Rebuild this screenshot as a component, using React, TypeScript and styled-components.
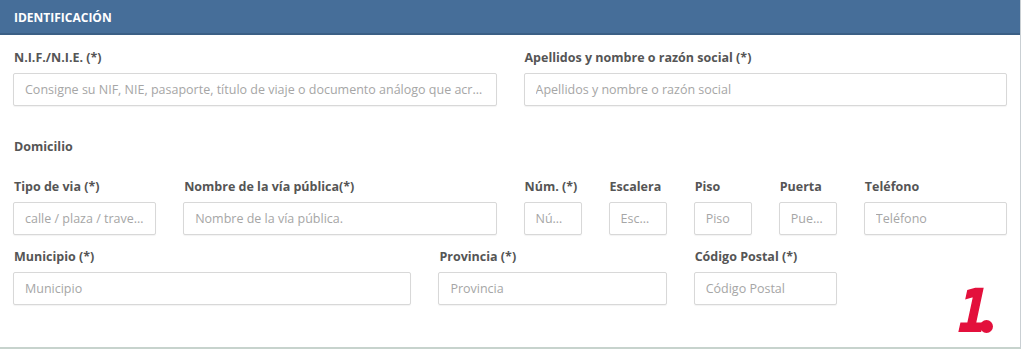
import styled, { createGlobalStyle } from "styled-components";

const GlobalStyle = createGlobalStyle`
  html, body {
    margin: 0;
    padding: 0;
    background: #ffffff;
  }
  body {
    font-family: "Open Sans", "Liberation Sans", Arial, sans-serif;
  }
`;

// Outer panel with the blue heading bar
const Panel = styled.section`
  position: relative;
  width: 1021px;
  height: 349px;
  box-sizing: border-box;
  border-right: 1px solid #c9cfd3;
  border-bottom: 2px solid #c7d3cd;
  background: #fff;
`;

const Heading = styled.div`
  height: 35px;
  box-sizing: border-box;
  background: #466e99;
  border-bottom: 2px solid #3b5f85;
  color: #fff;
  font-size: 12px;
  font-weight: 700;
  padding: 9px 14px 0;
`;

const Body = styled.div`
  padding: 15px 13px 0 13px;
`;

// Bootstrap like 12 column grid
const Row = styled.div<{ $mt?: number }>`
  display: grid;
  grid-template-columns: repeat(12, 1fr);
  column-gap: 27px;
  margin-top: ${(p) => p.$mt ?? 0}px;
`;

const Field = styled.div<{ $span: number }>`
  grid-column: span ${(p) => p.$span};
  display: flex;
  flex-direction: column;
  min-width: 0;
`;

const Label = styled.label`
  font-size: 12.5px;
  font-weight: 700;
  color: #555;
  line-height: 16px;
  padding-left: 1px;
  margin-bottom: 7px;
  white-space: nowrap;
`;

const Section = styled.div`
  font-size: 12.5px;
  font-weight: 700;
  color: #555;
  line-height: 16px;
  padding-left: 1px;
  margin-top: 33px;
`;

const Input = styled.input`
  height: 33px;
  box-sizing: border-box;
  width: 100%;
  border: 1px solid #d8d8d8;
  border-radius: 2px;
  box-shadow: 0 1px 1px rgba(0, 0, 0, 0.05);
  padding: 0 11px;
  font-family: inherit;
  font-size: 12.5px;
  color: #555;
  text-overflow: ellipsis;
  outline: none;

  &::placeholder {
    color: #a6a6a6;
    text-overflow: ellipsis;
  }
`;

// red "1." step marker in the corner
const Step = styled.div`
  position: absolute;
  right: 27px;
  bottom: 14px;
  display: flex;
  align-items: flex-end;
  color: #e3103c;
  font-family: "DejaVu Sans", "Liberation Sans", sans-serif;
  font-weight: 700;
  font-style: italic;
  line-height: 1;
`;

const Digit = styled.span`
  font-size: 58px;
  line-height: 44px;
  height: 44px;
  display: block;
  -webkit-text-stroke: 2px #e3103c;
  transform: scaleX(0.72) skewX(-6deg);
  transform-origin: right bottom;
  margin-right: -6px;
`;

// the period, rounded off like in the marker
const Dot = styled.span`
  display: block;
  width: 13px;
  height: 13px;
  border-radius: 50%;
  overflow: hidden;
  background: #e3103c;
  font-size: 13px;
  line-height: 13px;
  text-align: center;
`;

type F = { span: number; label: string; ph: string };

const row2: F[] = [
  { span: 2, label: "Tipo de via (*)", ph: "calle / plaza / travesía..." },
  { span: 4, label: "Nombre de la vía pública(*)", ph: "Nombre de la vía pública." },
  { span: 1, label: "Núm. (*)", ph: "Número" },
  { span: 1, label: "Escalera", ph: "Escalera" },
  { span: 1, label: "Piso", ph: "Piso" },
  { span: 1, label: "Puerta", ph: "Puerta" },
  { span: 2, label: "Teléfono", ph: "Teléfono" },
];

const row3: F[] = [
  { span: 5, label: "Municipio (*)", ph: "Municipio" },
  { span: 3, label: "Provincia (*)", ph: "Provincia" },
  { span: 2, label: "Código Postal (*)", ph: "Código Postal" },
];

const renderField = (f: F) => (
  <Field key={f.label} $span={f.span}>
    <Label>{f.label}</Label>
    <Input placeholder={f.ph} />
  </Field>
);

const App = () => {
  return (
    <>
      <GlobalStyle />
      <Panel>
        <Heading>IDENTIFICACIÓN</Heading>
        <Body>
          <Row>
            {renderField({
              span: 6,
              label: "N.I.F./N.I.E. (*)",
              ph: "Consigne su NIF, NIE, pasaporte, título de viaje o documento análogo que acredite su identidad",
            })}
            {renderField({
              span: 6,
              label: "Apellidos y nombre o razón social (*)",
              ph: "Apellidos y nombre o razón social",
            })}
          </Row>
          <Section>Domicilio</Section>
          <Row $mt={24}>{row2.map(renderField)}</Row>
          <Row $mt={14}>{row3.map(renderField)}</Row>
        </Body>
        <Step>
          <Digit>1</Digit>
          <Dot>.</Dot>
        </Step>
      </Panel>
    </>
  );
};

export default App;
